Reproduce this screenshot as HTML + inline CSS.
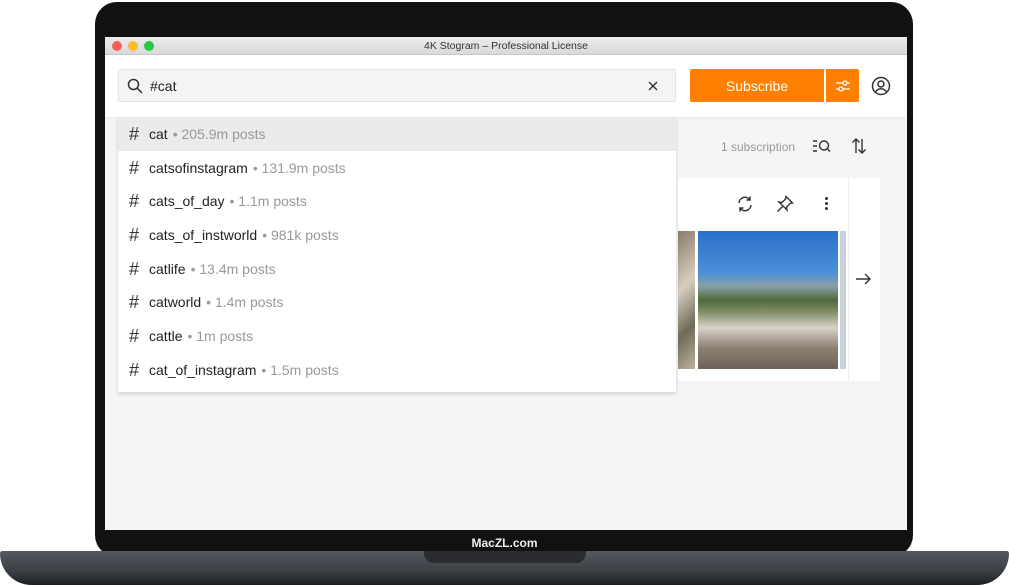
<!DOCTYPE html>
<html><head><style>
*{margin:0;padding:0;box-sizing:border-box}
body{width:1009px;height:586px;background:#fff;position:relative;overflow:hidden;font-family:"Liberation Sans",sans-serif}
.a{position:absolute}
.row{position:absolute;left:0;width:558px;height:34px;font-size:14px;color:#222;display:flex;align-items:center;padding-left:11px}
.row .h{font-size:18px;margin-right:10px;color:#333}
.row .c{color:#999;margin-left:5px}
</style></head><body>
<div class="a" style="left:95px;top:2px;width:818px;height:555px;background:#111;border-radius:22px"></div>
<div class="a" style="left:0;top:551px;width:1009px;height:34px;background:linear-gradient(#555a60,#3b3f44 60%,#1c1e21);border-radius:3px 3px 40px 40px"></div>
<div class="a" style="left:424px;top:551px;width:162px;height:12px;background:#2a2c2f;border-radius:0 0 10px 10px"></div>
<div class="a" style="left:0;top:536px;width:1009px;text-align:center;color:#eee;font-size:12px;font-weight:bold">MacZL.com</div>
<div class="a" style="left:105px;top:37px;width:802px;height:493px;background:#f5f5f5;overflow:hidden">
 <div class="a" style="left:0;top:0;width:802px;height:18px;background:linear-gradient(#ececec,#d9d9d9);border-bottom:1px solid #c8c8c8;font-size:10.5px;color:#333;text-align:center;line-height:18px">4K Stogram – Professional License</div>
 <div class="a" style="left:7px;top:4px;width:10px;height:10px;border-radius:5px;background:#fc5f57"></div>
 <div class="a" style="left:23px;top:4px;width:10px;height:10px;border-radius:5px;background:#fdbc2e"></div>
 <div class="a" style="left:39px;top:4px;width:10px;height:10px;border-radius:5px;background:#28c840"></div>
 <div class="a" style="left:0;top:18px;width:802px;height:62px;background:#fff;box-shadow:0 1px 2px rgba(0,0,0,.06)"></div>
 <div class="a" style="left:13px;top:32px;width:558px;height:33px;background:#f4f4f4;border:1px solid #e6e6e6;border-radius:2px"></div>
 <svg class="a" style="left:22px;top:41px" width="16" height="16" viewBox="0 0 16 16" fill="none" stroke="#333" stroke-width="1.5"><circle cx="6.5" cy="6.5" r="5"/><path d="M10.2 10.2L15 15"/></svg>
 <div class="a" style="left:45px;top:41px;font-size:14px;color:#222">#cat</div>
 <svg class="a" style="left:543px;top:44px" width="10" height="10" viewBox="0 0 10 10" stroke="#333" stroke-width="1.4"><path d="M1 1L9 9M9 1L1 9"/></svg>
 <div class="a" style="left:585px;top:32px;width:134px;height:33px;background:#ff7f00;border-radius:2px 0 0 2px;color:#fff;font-size:14px;text-align:center;line-height:35px">Subscribe</div>
 <div class="a" style="left:721px;top:32px;width:33px;height:33px;background:#ff7f00;border-radius:0 2px 2px 0"></div>
 <svg class="a" style="left:729px;top:40px" width="18" height="18" viewBox="0 0 18 18" fill="none" stroke="#fff" stroke-width="1.3"><path d="M2 6H16M2 12H16"/><circle cx="11" cy="6" r="2" fill="#ff7f00"/><circle cx="7" cy="12" r="2" fill="#ff7f00"/></svg>
 <svg class="a" style="left:766px;top:39px" width="20" height="20" viewBox="0 0 20 20" fill="none" stroke="#333" stroke-width="1.5"><circle cx="10" cy="10" r="8.5"/><circle cx="10" cy="8" r="3"/><path d="M4.5 16c1.5-2.5 3.5-3.3 5.5-3.3s4 .8 5.5 3.3"/></svg>
 <div class="a" style="left:616px;top:103px;font-size:12px;color:#999">1 subscription</div>
 <svg class="a" style="left:707px;top:102px" width="20" height="14" viewBox="0 0 20 14" fill="none" stroke="#333" stroke-width="1.4"><path d="M1 2H5M1 7H5M1 12H5"/><circle cx="12" cy="6.5" r="4.5"/><path d="M15.3 9.8L18 12.5"/></svg>
 <svg class="a" style="left:746px;top:101px" width="16" height="16" viewBox="0 0 16 16" fill="none" stroke="#333" stroke-width="1.4"><path d="M5 15V1M1.5 4.5L5 1L8.5 4.5M11 1V15M7.5 11.5L11 15L14.5 11.5"/></svg>
 <div class="a" style="left:573px;top:141px;width:202px;height:203px;background:#fff"></div>
 <div class="a" style="left:743px;top:141px;width:32px;height:203px;background:#fff;border-left:1px solid #eee"></div>
 <svg class="a" style="left:631px;top:158px" width="18" height="18" viewBox="0 0 18 18" fill="none" stroke="#333" stroke-width="1.5"><path d="M3 8a6 6 0 0 1 11-3M15 10a6 6 0 0 1-11 3M14 1.5V5H10.5M4 16.5V13H7.5"/></svg>
 <svg class="a" style="left:671px;top:158px" width="18" height="18" viewBox="0 0 18 18" fill="none" stroke="#333" stroke-width="1.4"><path d="M10 1.5L16.5 8L14 8.5L10.5 12L11 15L3 7L6 7.5L9.5 4Z"/><path d="M6.5 11.5L1.5 16.5"/></svg>
 <div class="a" style="left:720px;top:160px;width:3px;height:3px;border-radius:2px;background:#333;box-shadow:0 5px 0 #333,0 10px 0 #333"></div>
 <div class="a" style="left:573px;top:194px;width:17px;height:138px;background:linear-gradient(135deg,#8a7a6a,#d8cfc0 40%,#6f6a58 70%,#bdb3a0)"></div>
 <div class="a" style="left:593px;top:194px;width:140px;height:138px;background:linear-gradient(#2a6fc8 0%,#4a90d8 30%,#8aa0a8 40%,#4e6a3c 50%,#8a9470 60%,#d8d2c8 70%,#8c7e72 85%,#6e6258 100%)"></div>
 <div class="a" style="left:735px;top:194px;width:6px;height:138px;background:#c8d0d8"></div>
 <svg class="a" style="left:750px;top:236px" width="16" height="12" viewBox="0 0 16 12" fill="none" stroke="#333" stroke-width="1.4"><path d="M1 6H15M10 1L15 6L10 11"/></svg>
 <div class="a" style="left:13px;top:80px;width:558px;height:275px;background:#fff;box-shadow:0 2px 4px rgba(0,0,0,.15)">
  <div class="row" style="top:0;background:#ebebeb"><span class="h">#</span>cat<span class="c">• 205.9m posts</span></div>
  <div class="row" style="top:34px"><span class="h">#</span>catsofinstagram<span class="c">• 131.9m posts</span></div>
  <div class="row" style="top:67px"><span class="h">#</span>cats_of_day<span class="c">• 1.1m posts</span></div>
  <div class="row" style="top:101px"><span class="h">#</span>cats_of_instworld<span class="c">• 981k posts</span></div>
  <div class="row" style="top:135px"><span class="h">#</span>catlife<span class="c">• 13.4m posts</span></div>
  <div class="row" style="top:168px"><span class="h">#</span>catworld<span class="c">• 1.4m posts</span></div>
  <div class="row" style="top:202px"><span class="h">#</span>cattle<span class="c">• 1m posts</span></div>
  <div class="row" style="top:236px"><span class="h">#</span>cat_of_instagram<span class="c">• 1.5m posts</span></div>
 </div>
</div>
</body></html>
